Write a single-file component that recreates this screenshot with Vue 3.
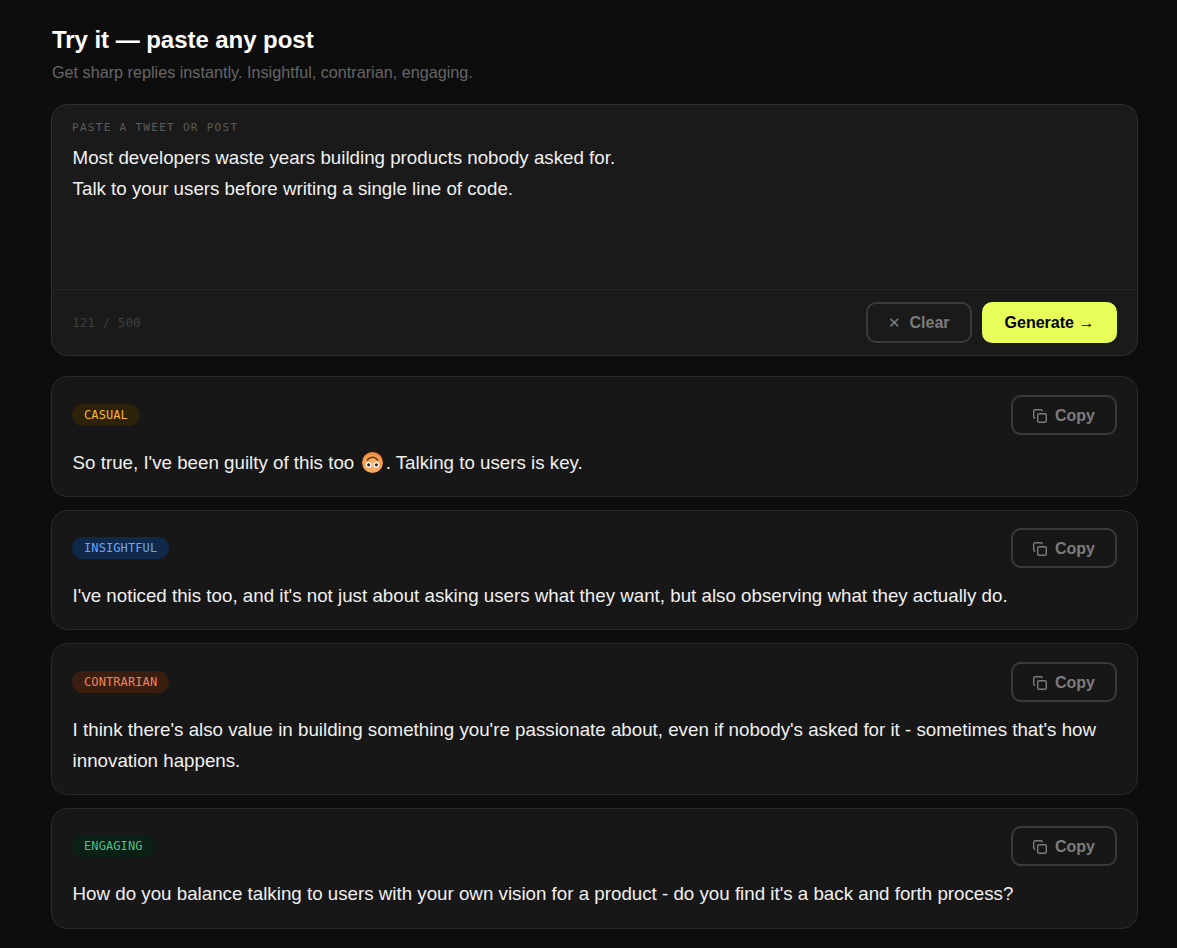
<template>
  <div class="page">
    <h2 class="title">Try it — paste any post</h2>
    <p class="sub">Get sharp replies instantly. Insightful, contrarian, engaging.</p>

    <div class="input-card">
      <label class="input-label">PASTE A TWEET OR POST</label>
      <div class="input-text">
        <div v-for="line in postLines" :key="line">{{ line }}</div>
      </div>
      <div class="input-foot">
        <span class="count">121 / 500</span>
        <div class="actions">
          <button class="btn ghost clear"><span class="x">✕</span>Clear</button>
          <button class="btn primary">Generate →</button>
        </div>
      </div>
    </div>

    <div v-for="reply in replies" :key="reply.tone" class="reply">
      <div class="reply-head">
        <span class="tag" :class="reply.tone">{{ reply.tone.toUpperCase() }}</span>
        <button class="btn ghost copy">
          <svg width="14" height="14" viewBox="0 0 14 14" fill="none" stroke="currentColor" stroke-width="1.4">
            <rect x="4.7" y="4.7" width="8.6" height="8.6" rx="1.4" />
            <path d="M2.2 9.3 A1.5 1.5 0 0 1 0.7 7.8 V2.2 A1.5 1.5 0 0 1 2.2 0.7 H7.8 A1.5 1.5 0 0 1 9.3 2.2" />
          </svg>
          Copy
        </button>
      </div>
      <p class="reply-text">
        {{ reply.before }}<svg v-if="reply.emoji" class="emoji" width="21" height="21" viewBox="0 0 20 20">
          <defs>
            <radialGradient id="face" cx="50%" cy="62%" r="62%">
              <stop offset="0" stop-color="#f8b678" />
              <stop offset="0.65" stop-color="#f5a552" />
              <stop offset="1" stop-color="#ee7f3c" />
            </radialGradient>
          </defs>
          <circle cx="10" cy="10" r="10" fill="url(#face)" />
          <path d="M5 7.5 Q10 2.5 15 7.5" fill="none" stroke="#5a3420" stroke-width="1.4" stroke-linecap="round" />
          <circle cx="6.3" cy="12.2" r="2.7" fill="#fff" />
          <circle cx="13.7" cy="12.2" r="2.7" fill="#fff" />
          <circle cx="6.3" cy="12.2" r="1.5" fill="#33231c" />
          <circle cx="13.7" cy="12.2" r="1.5" fill="#33231c" />
        </svg>{{ reply.after }}
      </p>
    </div>
  </div>
</template>

<script setup>
const postLines = [
  'Most developers waste years building products nobody asked for.',
  'Talk to your users before writing a single line of code.',
]

const replies = [
  { tone: 'casual', before: "So true, I've been guilty of this too ", emoji: true, after: ' . Talking to users is key.' },
  { tone: 'insightful', before: "I've noticed this too, and it's not just about asking users what they want, but also observing what they actually do." },
  { tone: 'contrarian', before: "I think there's also value in building something you're passionate about, even if nobody's asked for it - sometimes that's how innovation happens." },
  { tone: 'engaging', before: "How do you balance talking to users with your own vision for a product - do you find it's a back and forth process?" },
]
</script>

<style scoped>
.page {
  width: 1087px;
  margin-left: 51px;
  padding-top: 24px;
  font-family: "Liberation Sans", Arial, sans-serif;
  color: #f0f0f0;
}
.title {
  margin: 0 0 0 1px;
  font-size: 24px;
  line-height: 32px;
  font-weight: 700;
  letter-spacing: -0.05px;
  color: #fff;
}
.sub {
  margin: 6px 0 21px 1px;
  font-size: 16.2px;
  line-height: 21px;
  color: #666;
}
.input-card {
  height: 252px;
  box-sizing: border-box;
  background: #1a1a1a;
  border: 1px solid #2e2e2e;
  border-radius: 16px;
  display: flex;
  flex-direction: column;
  margin-bottom: 20px;
}
.input-label {
  margin: 17px 20px 0;
  font-family: "DejaVu Sans Mono", "Liberation Mono", monospace;
  font-size: 11px;
  line-height: 12px;
  letter-spacing: 1.3px;
  color: #5c5c5c;
}
.input-text {
  flex: 1;
  margin: 9px 20px 0 20.6px;
  font-size: 18.74px;
  line-height: 30.9px;
  color: #f0f0f0;
}
.input-foot {
  display: flex;
  align-items: center;
  justify-content: space-between;
  height: 65px;
  padding: 0 20px;
  border-top: 1px solid #242424;
}
.count {
  font-family: "DejaVu Sans Mono", "Liberation Mono", monospace;
  font-size: 12.7px;
  color: #3f3f3f;
}
.actions {
  display: flex;
  gap: 10px;
}
.btn {
  box-sizing: border-box;
  display: inline-flex;
  align-items: center;
  justify-content: center;
  border-radius: 10px;
  font-family: "Liberation Sans", Arial, sans-serif;
  font-size: 16px;
  font-weight: 700;
}
.ghost {
  background: transparent;
  border: 2px solid #3a3a3a;
  color: #7c7c7c;
}
.clear {
  width: 106px;
  height: 41px;
}
.x {
  font-size: 15px;
  font-weight: 400;
  margin-right: 8px;
}
.primary {
  width: 135px;
  height: 41px;
  background: #e8ff5a;
  border: none;
  color: #000;
}
.reply {
  box-sizing: border-box;
  background: #171717;
  border: 1px solid #2a2a2a;
  border-radius: 16px;
  padding: 17.7px 20px 17.3px;
  margin-bottom: 12.7px;
}
.reply-head {
  display: flex;
  align-items: center;
  justify-content: space-between;
  height: 40px;
}
.tag {
  font-family: "DejaVu Sans Mono", "Liberation Mono", monospace;
  font-size: 12px;
  letter-spacing: 0.1px;
  line-height: 22px;
  padding: 0 12px;
  border-radius: 11px;
}
.casual { color: #f5b82e; background: #2c2109; }
.insightful { color: #6ba6f5; background: #10294a; }
.contrarian { color: #f4815c; background: #3a1e10; }
.engaging { color: #4fbf85; background: #0b2015; }
.copy {
  width: 106px;
  height: 40px;
  gap: 8px;
  padding: 2px 0 0;
}
.reply-text {
  margin: 13px 0 0 0.6px;
  font-size: 18.74px;
  line-height: 30.9px;
  color: #f0f0f0;
}
.emoji {
  vertical-align: -4px;
  margin: 0 -3px 0 3px;
}
</style>

<style>
html, body {
  background: #0d0d0d;
}
</style>
